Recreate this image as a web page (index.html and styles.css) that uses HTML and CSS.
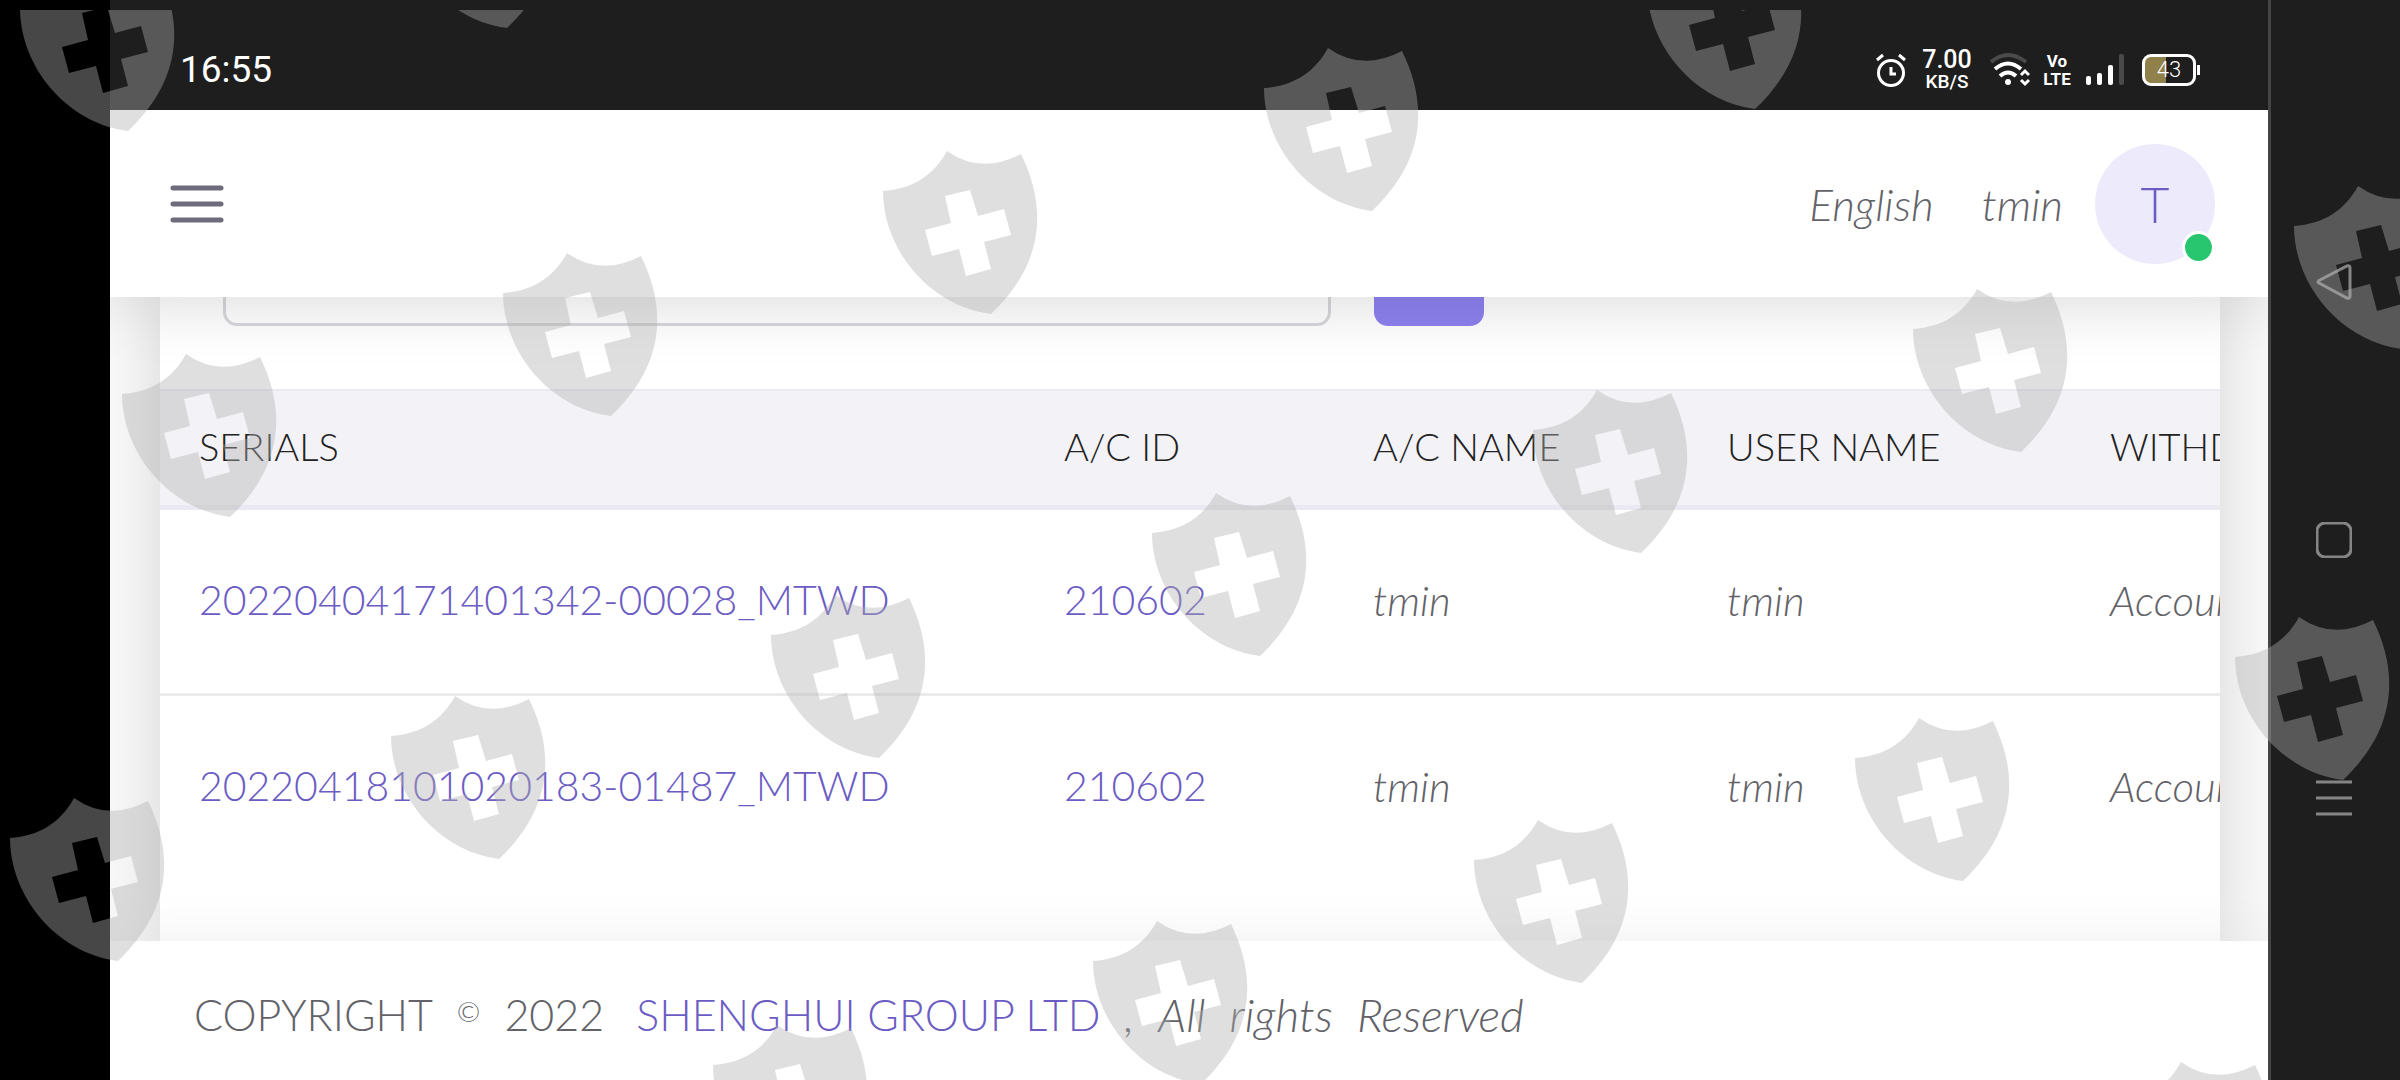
FILE: index.html
```html
<!DOCTYPE html>
<html lang="en">
<head>
<meta charset="utf-8">
<title>Withdrawals</title>
<link rel="stylesheet" href="styles.css">
</head>
<body>
<div class="device">
  <div class="app">
    <div class="status">
      <time class="clock">16:55</time>
      <div class="indicators">
        <svg class="alarm" width="30" height="38" viewBox="0 0 30 38" fill="none" stroke="#fff" stroke-width="3"><circle cx="15" cy="22" r="12.500"/><path d="M15 16v7h5M1 9l6-5M29 9l-6-5"/></svg>
        <div class="speed"><b>7.00</b><small>KB/S</small></div>
        <svg class="wifi" width="40" height="36" viewBox="0 0 40 36" fill="none" stroke="#fff" stroke-width="4"><path stroke="#4a4a4a" d="M1 10Q18-4 36 10"/><path d="M5 17Q18 6 31 17M10 24q8-7 16 0"/><circle cx="18" cy="30" r="3" fill="#fff" stroke="none"/><path stroke-width="3" d="M31 23l4-4 4 4M31 28l4 4 4-4"/></svg>
        <div class="volte"><b>Vo</b><b>LTE</b></div>
        <svg class="signal" width="38" height="32" viewBox="0 0 38 32"><g fill="#fff"><rect y="22" width="5" height="9" rx="2"/><rect x="11" y="19" width="5" height="12" rx="2"/><rect x="22" y="11" width="5" height="20" rx="2"/></g><rect x="33" width="5" height="31" rx="2" fill="#4a4a4a"/></svg>
        <div class="battery"><span>43</span></div>
      </div>
    </div>
    <header class="navbar">
      <button class="menu" type="button" aria-label="Menu"><svg width="54" height="38" viewBox="0 0 54 38" stroke="#6e6b7b" stroke-width="5" stroke-linecap="round"><path d="M3 3h48M3 19h48M3 35h48"/></svg></button>
      <nav class="user">
        <a class="lang" href="#">English</a>
        <a class="name" href="#">tmin</a>
        <a class="avatar" href="#" aria-label="Profile">T<i class="online"></i></a>
      </nav>
    </header>
    <main class="content">
      <section class="card">
        <form class="search">
          <input class="field" type="text" aria-label="Search">
          <button class="go" type="button" aria-label="Search"></button>
        </form>
        <table class="records">
          <colgroup><col class="c-serial"><col class="c-id"><col class="c-account"><col class="c-user"><col class="c-type"></colgroup>
          <thead><tr><th>SERIALS</th><th>A/C ID</th><th>A/C NAME</th><th>USER NAME</th><th>WITHD</th></tr></thead>
          <tbody>
            <tr><td><a href="#">20220404171401342-00028_MTWD</a></td><td><a href="#">210602</a></td><td>tmin</td><td>tmin</td><td>Accoun</td></tr>
            <tr><td><a href="#">20220418101020183-01487_MTWD</a></td><td><a href="#">210602</a></td><td>tmin</td><td>tmin</td><td>Accoun</td></tr>
          </tbody>
        </table>
      </section>
    </main>
    <footer class="footer">
      <span>COPYRIGHT</span><small>©</small><span>2022</span>
      <a href="#">SHENGHUI GROUP LTD</a>
      <em><span>,</span><span>All</span><span>rights</span><span>Reserved</span></em>
    </footer>
  </div>
  <nav class="softkeys">
    <button type="button" aria-label="Back"><svg width="36" height="36" viewBox="0 0 36 36"><path d="M3 16.500L31 2q3-1 3 2v28q0 3-3 2L3 19q-2-1 0-2.500z"/></svg></button>
    <button type="button" aria-label="Home"><svg width="36" height="36" viewBox="0 0 36 36"><rect x="1" y="1" width="34" height="34" rx="8"/></svg></button>
    <button type="button" aria-label="Recent apps"><svg width="36" height="36" viewBox="0 0 36 36"><path d="M0 2h36M0 18h36M0 34h36"/></svg></button>
  </nav>
</div>
<svg class="watermark" aria-hidden="true">
  <defs>
    <path id="shield" fill-rule="evenodd" d="M0 40C30 38 51 24 64 0Q98 24 138 3C164 56 162 112 108 163C46 155 0 98 0 40ZM62 45L87 39 95 65 121 58 128 84 101 91 108 118 83 125 76 98 49 105 42 79 68 72Z"/>
  </defs>
  <g fill="#b0b0b0" fill-opacity="0.404">
    <use href="#shield" x="20" y="-42"/><use href="#shield" x="399" y="-145"/>
    <use href="#shield" x="122" y="344"/><use href="#shield" x="503" y="243"/><use href="#shield" x="883" y="141"/><use href="#shield" x="1264" y="38"/><use href="#shield" x="1647" y="-64"/>
    <use href="#shield" x="10" y="788"/><use href="#shield" x="391" y="686"/><use href="#shield" x="771" y="585"/><use href="#shield" x="1152" y="483"/><use href="#shield" x="1533" y="380"/><use href="#shield" x="1913" y="279"/><use href="#shield" x="2294" y="176"/>
    <use href="#shield" x="713" y="1015"/><use href="#shield" x="1093" y="911"/><use href="#shield" x="1474" y="810"/><use href="#shield" x="1855" y="708"/><use href="#shield" x="2235" y="607"/>
    <use href="#shield" x="2117" y="1052"/>
  </g>
</svg>
</body>
</html>
```
FILE: styles.css
```css
* { box-sizing: border-box; }
body {
  margin: 0;
  position: relative;
  overflow: hidden;
  background: #000;
  color: #626268;
  font: 300 42px/60px Lato, "Noto Sans", sans-serif;
}
a { color: #6b5cc4; text-decoration: none; }
button { padding: 0; border: 0; background: none; }
svg { display: block; }

.device { display: flex; min-height: 100vh; padding-left: 110px; }
.app {
  flex: 1;
  min-width: 0;
  display: grid;
  grid-template-rows: auto auto 1fr auto;
  background: #f8f8f8;
}

.status {
  display: flex;
  justify-content: space-between;
  align-items: center;
  height: 110px;
  padding: 30px 72px 0 70px;
  background: #1e1e1e;
  color: #fff;
}
.clock { font: 400 37px/44px Roboto, sans-serif; }
.indicators { display: flex; align-items: center; font-family: Roboto, sans-serif; }
.speed { display: grid; justify-items: center; width: 50px; margin: 0 18px 0 16px; }
.speed b { font: 500 25px/24px Roboto, sans-serif; }
.speed small { font: 500 19px/20px Roboto, sans-serif; }
.wifi { margin-right: 12px; }
.volte { display: grid; justify-items: center; width: 30px; margin-right: 14px; }
.volte b { font: 700 17px/18px Roboto, sans-serif; }
.battery {
  position: relative;
  width: 54px;
  height: 32px;
  margin-left: 18px;
  border: 3px solid #fff;
  border-radius: 9px;
  background: linear-gradient(90deg, #8f8149 44%, transparent 44%);
  font: 300 22px/26px Roboto, sans-serif;
  text-align: center;
}
.battery::after {
  content: "";
  position: absolute;
  top: 8px;
  right: -7px;
  width: 3px;
  height: 10px;
  background: #fff;
}

.navbar {
  position: relative;
  z-index: 1;
  display: flex;
  justify-content: space-between;
  align-items: center;
  height: 187px;
  padding: 0 53px 0 60px;
  background: #fff;
  box-shadow: 0 8px 60px rgba(0, 0, 0, 0.14);
  clip-path: inset(0 0 -100px 0);
}
.user { display: flex; align-items: center; }
.user a { color: #626268; font-size: 44px; font-style: italic; }
.user .lang { margin-right: 48px; }
.user .name { margin-right: 32px; }
.user .avatar {
  position: relative;
  width: 120px;
  height: 120px;
  border-radius: 50%;
  background: #edebfb;
  color: #6b5cc4;
  font: 300 50px/120px Lato, sans-serif;
  text-align: center;
}
.online {
  position: absolute;
  right: 0;
  bottom: 0;
  width: 33px;
  height: 33px;
  border: 3px solid #fff;
  border-radius: 50%;
  background: #28c76f;
}

.content { overflow: hidden; padding: 0 48px 0 50px; }
.card {
  height: 100%;
  overflow: hidden;
  background: #fff;
  box-shadow: 0 0 56px rgba(0, 0, 0, 0.14);
}
.search { display: flex; gap: 42px; margin-top: -55px; padding: 0 63px 63px; }
.field { width: 1108px; height: 84px; border: 3px solid #d8d8dc; border-radius: 14px; background: transparent; font: inherit; }
.go { width: 110px; height: 84px; margin-left: 1px; border-radius: 14px; background: #8d82f0; }

.records { width: 2161px; table-layout: fixed; border-collapse: separate; border-spacing: 0; }
.c-serial { width: 865px; }
.c-id { width: 309px; }
.c-account { width: 354px; }
.c-user { width: 383px; }
.c-type { width: 250px; }
.records th {
  padding: 26px 0 30px 39px;
  border-top: 2px solid #ebe9f1;
  border-bottom: 5px solid #ebe9f1;
  background: #f3f2f7;
  color: #222;
  font: 300 38px/58px Lato, sans-serif;
  text-align: left;
}
.records td { padding: 59px 0 63px 39px; font-style: italic; white-space: nowrap; }
.records td a { font-size: 41px; font-style: normal; }
.records tbody tr + tr td { border-top: 3px solid #ebebed; }

.footer {
  position: relative;
  display: flex;
  gap: 24px;
  padding: 44px 84px 35px;
  background: #fff;
  box-shadow: 0 0 56px rgba(0, 0, 0, 0.07);
  clip-path: inset(-100px 0 0 0);
  font-size: 43px;
}
.footer small { font-size: 28px; line-height: 52px; }
.footer a { margin-left: 8px; }
.footer em { display: flex; gap: 24px; font-size: 46px; }

.softkeys {
  display: flex;
  flex-direction: column;
  align-items: center;
  justify-content: center;
  gap: 222px;
  width: 132px;
  padding-right: 4px;
  border-left: 3px solid #444;
  background: #1e1e1e;
}
.softkeys svg { fill: none; stroke: #858585; stroke-width: 3; }

.watermark {
  position: absolute;
  top: 10px;
  left: 0;
  width: 100%;
  height: calc(100% - 10px);
  overflow: hidden;
  pointer-events: none;
  z-index: 5;
}
```
